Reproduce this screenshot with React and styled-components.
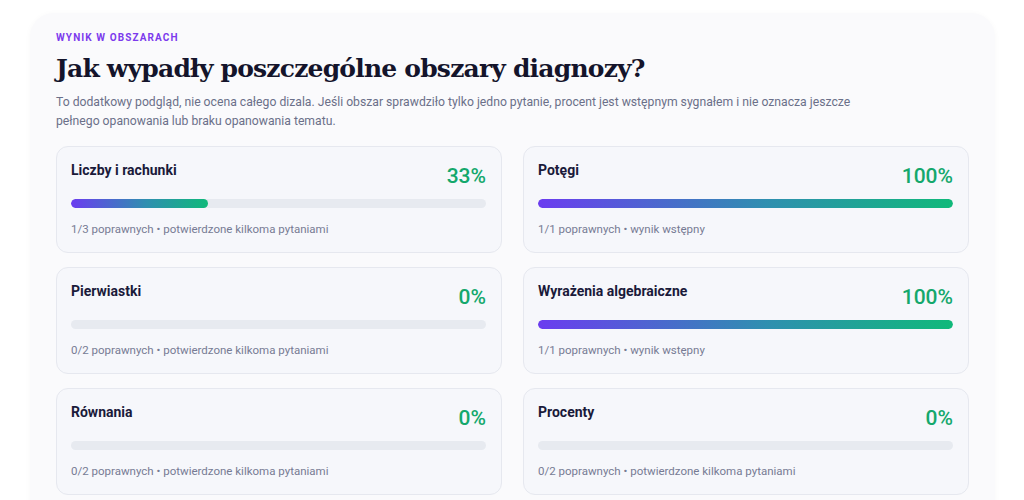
import React from "react";
import styled, { createGlobalStyle } from "styled-components";

const GlobalStyle = createGlobalStyle`
  html, body {
    margin: 0;
    padding: 0;
    background: #ffffff;
  }
  body {
    font-family: Roboto, "Noto Sans", "Liberation Sans", sans-serif;
    -webkit-font-smoothing: antialiased;
  }
`;

const Page = styled.div`
  padding: 13px 29px 0 30px;
  height: 500px;
  box-sizing: border-box;
  overflow: hidden;
`;

const Panel = styled.section`
  background: #fafafc;
  border-radius: 24px;
  box-shadow: 0 1px 6px rgba(30, 30, 60, 0.03);
  padding: 19px 26px 30px 26px;
`;

const Eyebrow = styled.div`
  font-size: 10px;
  font-weight: 700;
  letter-spacing: 1.1px;
  color: #7c3aed;
  text-transform: uppercase;
  line-height: 12px;
`;

const Heading = styled.h2`
  margin: 8px 0 0 0;
  font-family: "DejaVu Serif", "Liberation Serif", serif;
  font-weight: 700;
  font-size: 25px;
  line-height: 34px;
  color: #14142b;
  letter-spacing: -0.8px;
`;

const Lead = styled.p`
  margin: 7px 0 0 0;
  font-size: 12.2px;
  line-height: 19px;
  color: #6b7089;
  max-width: 810px;
`;

const Grid = styled.div`
  margin-top: 15px;
  display: grid;
  grid-template-columns: 446px 446px;
  column-gap: 21px;
  row-gap: 14px;
`;

const Card = styled.div`
  background: #f6f7fb;
  border: 1px solid #e6e8ef;
  border-radius: 12px;
  padding: 14px 15px 14px 14px;
  height: 107px;
  box-sizing: border-box;
  display: flex;
  flex-direction: column;
`;

const CardHead = styled.div`
  display: flex;
  justify-content: space-between;
  align-items: flex-start;
`;

const CardTitle = styled.div`
  font-size: 14px;
  font-weight: 700;
  color: #1a1a3a;
  line-height: 18px;
`;

const Percent = styled.div`
  font-size: 21px;
  font-weight: 500;
  color: #14a86c;
  line-height: 24px;
  margin-top: 3px;
`;

const Track = styled.div`
  margin-top: 11px;
  height: 9px;
  border-radius: 5px;
  background: #e7eaf0;
  overflow: hidden;
`;

const Fill = styled.div`
  height: 100%;
  border-radius: 5px;
  background: linear-gradient(90deg, #6b3cf0 0%, #2f8fb0 55%, #10b97a 100%);
`;

const Meta = styled.div`
  margin-top: 13px;
  font-size: 11.5px;
  line-height: 16px;
  color: #767b94;
`;

const areas = [
  { name: "Liczby i rachunki", pct: 33, meta: "1/3 poprawnych • potwierdzone kilkoma pytaniami" },
  { name: "Potęgi", pct: 100, meta: "1/1 poprawnych • wynik wstępny" },
  { name: "Pierwiastki", pct: 0, meta: "0/2 poprawnych • potwierdzone kilkoma pytaniami" },
  { name: "Wyrażenia algebraiczne", pct: 100, meta: "1/1 poprawnych • wynik wstępny" },
  { name: "Równania", pct: 0, meta: "0/2 poprawnych • potwierdzone kilkoma pytaniami" },
  { name: "Procenty", pct: 0, meta: "0/2 poprawnych • potwierdzone kilkoma pytaniami" },
];

function AreaCard({ name, pct, meta }) {
  return (
    <Card>
      <CardHead>
        <CardTitle>{name}</CardTitle>
        <Percent>{pct}%</Percent>
      </CardHead>
      <Track>
        {pct > 0 && <Fill style={{ width: `${pct}%` }} />}
      </Track>
      <Meta>{meta}</Meta>
    </Card>
  );
}

export default function App() {
  return (
    <>
      <GlobalStyle />
      <Page>
        <Panel>
          <Eyebrow>Wynik w obszarach</Eyebrow>
          <Heading>Jak wypadły poszczególne obszary diagnozy?</Heading>
          <Lead>
            To dodatkowy podgląd, nie ocena całego dizala. Jeśli obszar sprawdziło tylko jedno pytanie,
            procent jest wstępnym sygnałem i nie oznacza jeszcze pełnego opanowania lub braku opanowania
            tematu.
          </Lead>
          <Grid>
            {areas.map((a) => (
              <AreaCard key={a.name} {...a} />
            ))}
          </Grid>
        </Panel>
      </Page>
    </>
  );
}
